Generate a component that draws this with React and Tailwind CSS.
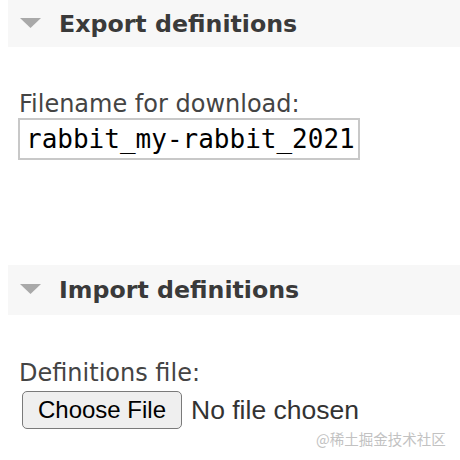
export default function App() {
  return (
    <div className="relative w-[460px] h-[460px] bg-white overflow-hidden font-['DejaVu_Sans',Verdana,sans-serif] text-[#444]">
      <div className="ml-[8px] h-[47px] bg-[#f7f7f7] flex items-center">
        <svg width="21" height="10" viewBox="0 0 21 10" className="ml-[12px] mt-[-2px]">
          <polygon points="0,0 21,0 10.5,10" fill="#a9a9a9" />
        </svg>
        <h2 className="ml-[18px] text-[23.7px] font-bold leading-[28px] text-[#3a3a3a]">Export definitions</h2>
      </div>

      <div className="mt-[43px] pl-[19px] text-[24px] leading-[28px]">Filename for download:</div>
      <div className="ml-[18px] w-[342px] h-[42px] border-2 border-[#c8c8c8] flex items-center pl-[6px] overflow-hidden">
        <span className="font-['DejaVu_Sans_Mono',monospace] text-[26px] text-black whitespace-nowrap leading-none">rabbit_my-rabbit_2021</span>
      </div>

      <div className="mt-[105px] ml-[8px] h-[50px] bg-[#f7f7f7] flex items-center">
        <svg width="21" height="10" viewBox="0 0 21 10" className="ml-[12px] mt-[-2px]">
          <polygon points="0,0 21,0 10.5,10" fill="#a9a9a9" />
        </svg>
        <h2 className="ml-[18px] text-[23.7px] font-bold leading-[28px] text-[#3a3a3a]">Import definitions</h2>
      </div>

      <div className="mt-[44px] pl-[19px] text-[24px] leading-[28px]">Definitions file:</div>
      <div className="mt-[4px] ml-[22px] flex items-center font-['Liberation_Sans',Arial,sans-serif]">
        <button className="h-[38px] w-[160px] rounded-[5px] border border-[#7a7a7a] bg-[#efefef] text-[24px] text-black leading-none">
          Choose File
        </button>
        <span className="ml-[9px] text-[26.5px] text-[#333] leading-none">No file chosen</span>
      </div>

      <div className="absolute left-[316px] top-[430px] font-['Noto_Sans_CJK_SC',sans-serif] text-[14.5px] leading-[18px] text-[#c2c2c2] whitespace-nowrap">
        @稀土掘金技术社区
      </div>
    </div>
  )
}
